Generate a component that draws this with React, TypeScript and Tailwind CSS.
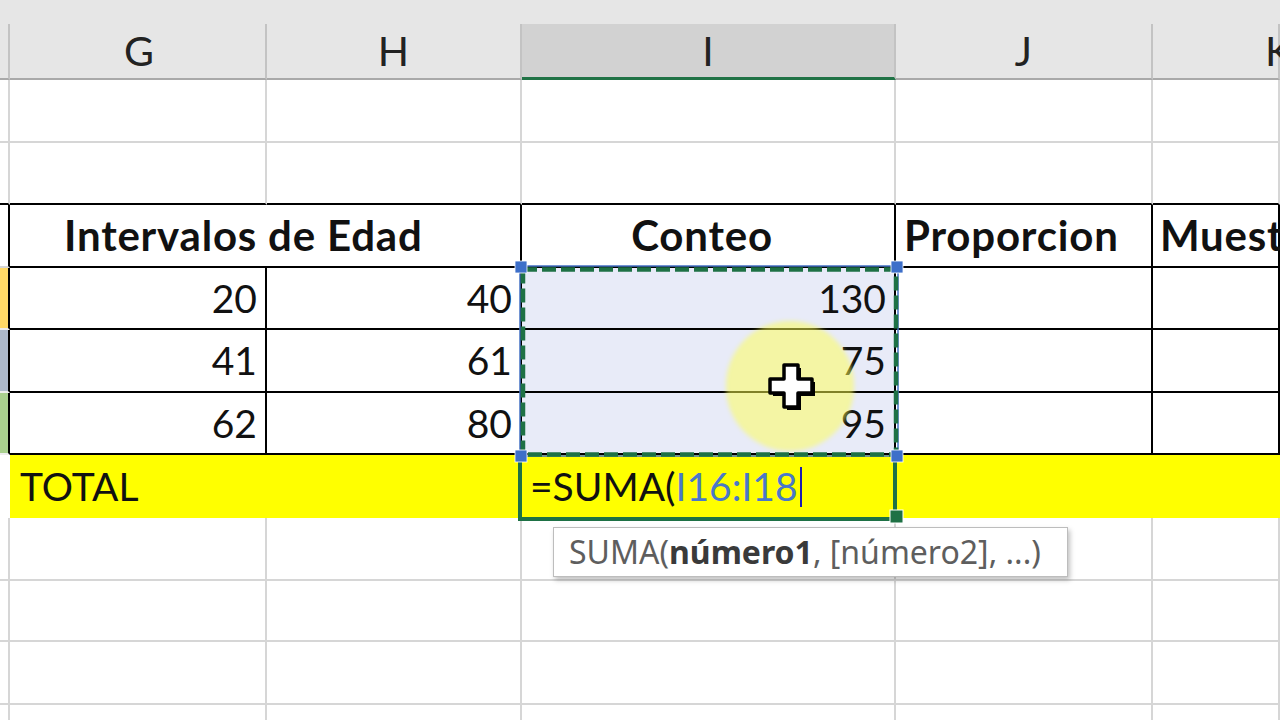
import React from "react";

const FONT = { fontFamily: "Lato, 'Noto Sans', sans-serif" };

type CellProps = {
  className?: string;
  r?: string;
  b?: string;
  children?: React.ReactNode;
};

function Cell({ className = "", r = "border-r-[#d6d6d6]", b = "border-b-[#d6d6d6]", children }: CellProps) {
  return (
    <div className={`box-border border-r-2 border-b-2 ${r} ${b} flex items-center overflow-visible whitespace-nowrap ${className}`}>
      {children}
    </div>
  );
}

function Plain({ className = "", children }: { className?: string; children?: React.ReactNode }) {
  return <div className={`box-border flex items-center whitespace-nowrap ${className}`}>{children}</div>;
}

const BR = "border-r-black";
const BB = "border-b-black";

export default function App() {
  return (
    <div className="relative w-[1280px] h-[720px] overflow-hidden bg-white text-[#111]" style={FONT}>
      {/* top strip */}
      <div className="h-[24px] bg-[#e6e6e6]" />
      <div className="grid grid-cols-[10px_257px_255px_374px_257px_127px] grid-rows-[56px_63px_62px_63px_62px_63px_62px_63px_63px_61px_63px_40px]">
        {/* column headers */}
        <Cell className="bg-[#e6e6e6]" r="border-r-[#c3c3c3]" b="border-b-[#a9a9a9]" />
        <Cell className="bg-[#e6e6e6] justify-center text-[41px] text-[#222] pl-[3px]" r="border-r-[#c3c3c3]" b="border-b-[#a9a9a9]">G</Cell>
        <Cell className="bg-[#e6e6e6] justify-center text-[41px] text-[#222]" r="border-r-[#c3c3c3]" b="border-b-[#a9a9a9]">H</Cell>
        <div className="box-border bg-[#d2d2d2] border-r-2 border-r-[#c3c3c3] border-b-[3px] border-b-[#217346] flex items-center justify-center text-[41px] text-[#222]">I</div>
        <Cell className="bg-[#e6e6e6] justify-center text-[41px] text-[#222]" r="border-r-[#c3c3c3]" b="border-b-[#a9a9a9]">J</Cell>
        <Cell className="bg-[#e6e6e6] text-[41px] text-[#222] pl-[112px]" r="border-r-[#c3c3c3]" b="border-b-[#a9a9a9]">K</Cell>

        {/* row 1 */}
        <Cell /><Cell /><Cell /><Cell /><Cell /><Cell />
        {/* row 2 */}
        <Cell b={BB} /><Cell b={BB} /><Cell b={BB} /><Cell b={BB} /><Cell b={BB} /><Cell b={BB} />

        {/* row 3 table header */}
        <Cell r={BR} />
        <Cell className="col-span-2 font-bold text-[42px] tracking-[0.8px] pl-[54px]" r={BR} b={BB}>Intervalos de Edad</Cell>
        <Cell className="font-bold text-[42px] tracking-[0.8px] justify-center pr-[12px]" r={BR} b={BB}>Conteo</Cell>
        <Cell className="font-bold text-[42px] tracking-[0.8px] pl-[8px]" r={BR} b={BB}>Proporcion</Cell>
        <Cell className="font-bold text-[42px] tracking-[0.8px] pl-[7px]" r={BR} b={BB}>Muestra</Cell>

        {/* data rows */}
        {[
          ["20", "40", "130", "bg-[#ffd966]"],
          ["41", "61", "75", "bg-[#acb9ca]"],
          ["62", "80", "95", "bg-[#a9d08e]"],
        ].map(([a, b2, c, col]) => (
          <React.Fragment key={a}>
            <Cell className={col} r={BR} b="border-b-[#eeeeee]" />
            <Cell className="justify-end pr-[8px] text-[39px]" r={BR} b={BB}>{a}</Cell>
            <Cell className="justify-end pr-[8px] text-[39px]" r={BR} b={BB}>{b2}</Cell>
            <Cell className="justify-end pr-[8px] text-[39px] bg-[#e8ebf8]" r={BR} b={BB}>{c}</Cell>
            <Cell r={BR} b={BB} />
            <Cell r={BR} b={BB} />
          </React.Fragment>
        ))}

        {/* TOTAL row */}
        <Plain />
        <Plain className="col-span-2 bg-[#ffff00] text-[39px] pl-[10px]">TOTAL</Plain>
        <Plain className="bg-[#ffff00] text-[39px] pl-[8px]">
          <span>=SUMA(</span>
          <span className="text-[#4a78c8]">I16:I18</span>
          <span className="inline-block w-[2px] h-[40px] bg-[#1c1cb0] ml-[2px]" />
        </Plain>
        <Plain className="bg-[#ffff00]" />
        <Plain className="bg-[#ffff00]" />

        {/* empty rows */}
        {Array.from({ length: 4 }).map((_, i) => (
          <React.Fragment key={i}>
            <Cell /><Cell /><Cell /><Cell /><Cell /><Cell />
          </React.Fragment>
        ))}
      </div>

      {/* highlight circle */}
      <div className="absolute left-[726px] top-[321px] w-[128px] h-[130px] rounded-full bg-[rgba(255,255,80,0.5)] blur-[2px]" />

      {/* selection borders */}
      <svg className="absolute left-0 top-0 pointer-events-none" width="1280" height="720">
        <rect x="520" y="266" width="378" height="190" fill="none" stroke="#4472c4" strokeWidth="1.5" />
        <rect x="523" y="269.5" width="373" height="185" fill="none" stroke="#1e7145" strokeWidth="4.5" strokeDasharray="14 5" />
        {/* active cell */}
        <rect x="518" y="456" width="4" height="65" fill="#1e7145" />
        <rect x="518" y="517" width="376" height="4" fill="#1e7145" />
        <rect x="893" y="458" width="4" height="55" fill="#1e7145" />
        <rect x="890" y="510" width="13" height="13" fill="#1e7145" stroke="#ffffff" strokeWidth="1" />
        {/* handles */}
        {[
          [521, 267],
          [897, 267],
          [521, 456],
          [897, 456],
        ].map(([x, y]) => (
          <rect key={`${x}-${y}`} x={x - 6} y={y - 6} width="12" height="12" fill="#3d6fc9" stroke="#ffffff" strokeWidth="0.8" />
        ))}
      </svg>

      {/* move cursor */}
      <svg className="absolute left-[766px] top-[361px]" width="54" height="54" viewBox="0 0 54 54">
        <polygon
          points="18,4 32,4 32,18 46,18 46,32 32,32 32,46 18,46 18,32 4,32 4,18 18,18"
          fill="#000"
          transform="translate(3 3)"
        />
        <polygon
          points="18,4 32,4 32,18 46,18 46,32 32,32 32,46 18,46 18,32 4,32 4,18 18,18"
          fill="#fff"
          stroke="#000"
          strokeWidth="3.5"
          strokeLinejoin="round"
        />
      </svg>

      {/* tooltip */}
      <div
        className="absolute left-[553px] top-[527px] w-[515px] h-[50px] bg-white border border-[#bdbdbd] shadow-[2px_3px_5px_rgba(0,0,0,0.25)] flex items-center pl-[15px] text-[32px] text-[#5e5e5e] whitespace-nowrap"
        style={{ fontFamily: "'Noto Sans', 'Open Sans', sans-serif" }}
      >
        <span>SUMA(</span>
        <span className="font-bold text-[#3a3a3a]">número1</span>
        <span>, [número2], ...)</span>
      </div>
    </div>
  );
}
